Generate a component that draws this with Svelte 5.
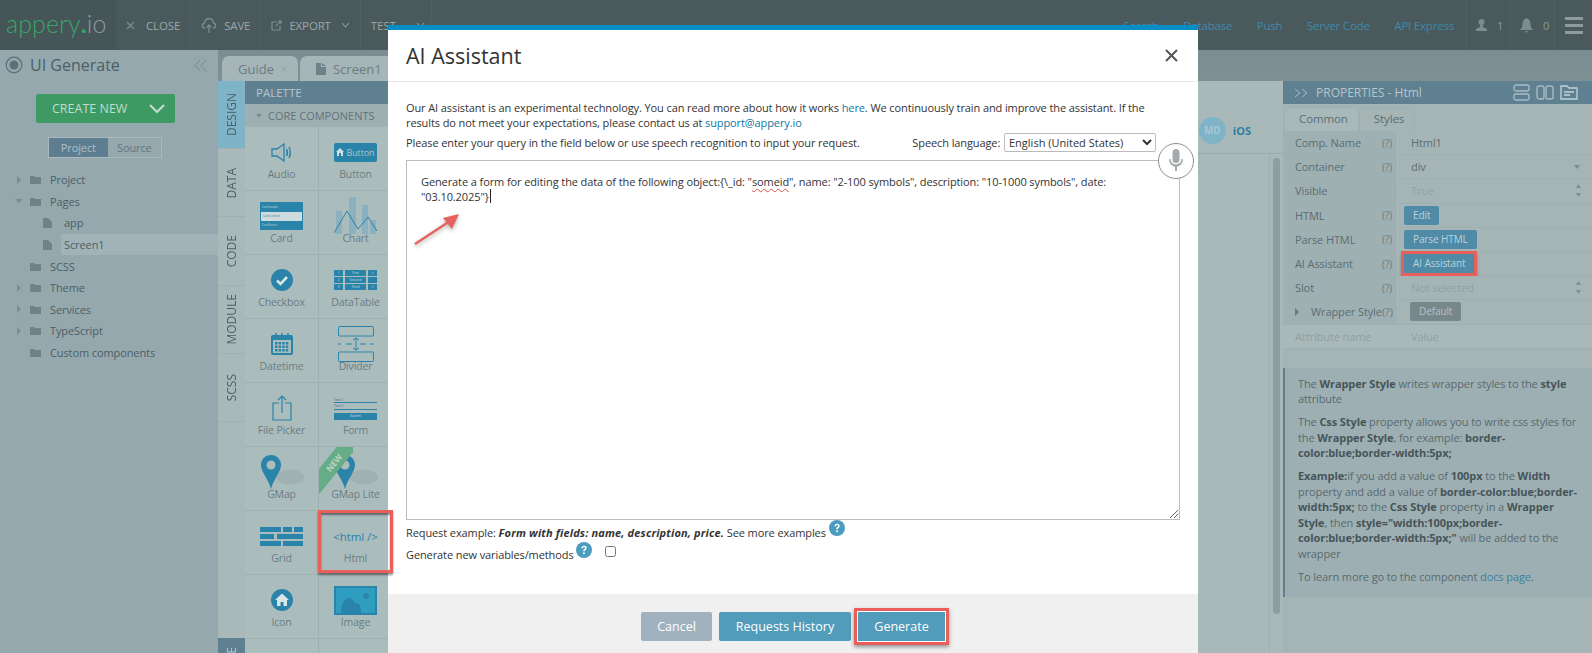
<script>
    // Left tree rows
    const tree = [
        { label: "Project", arrow: "right", icon: "folder" },
        { label: "Pages", arrow: "down", icon: "folder" },
        { label: "app", icon: "file", sub: true },
        { label: "Screen1", icon: "file", sub: true, selected: true },
        { label: "SCSS", icon: "folder" },
        { label: "Theme", arrow: "right", icon: "folder" },
        { label: "Services", arrow: "right", icon: "folder" },
        { label: "TypeScript", arrow: "right", icon: "folder" },
        { label: "Custom components", icon: "folder" }
    ];

    const sideTabs = ["Design", "Data", "Code", "Module", "SCSS"];

    const components = [
        "Audio", "Button", "Card", "Chart", "Checkbox", "DataTable", "Datetime", "Divider",
        "File Picker", "Form", "GMap", "GMap Lite", "Grid", "Html", "Icon", "Image", "", "Pin"
    ];

    const props = [
        { name: "Comp. Name", help: true, value: "Html1" },
        { name: "Container", help: true, value: "div", caret: true },
        { name: "Visible", value: "True", muted: true, spin: true },
        { name: "HTML", help: true, button: "Edit" },
        { name: "Parse HTML", help: true, button: "Parse HTML" },
        { name: "AI Assistant", help: true, button: "AI Assistant", marked: true },
        { name: "Slot", help: true, value: "Not selected", muted: true, spin: true }
    ];

    const blue = "#2a83a8";
</script>

{#snippet help()}
    <svg class="help" viewBox="0 0 16 16" width="16" height="16">
        <circle cx="8" cy="8" r="8" fill="#4b9dbf" />
        <path d="M5.4 6.2c0-1.6 1.2-2.5 2.7-2.5s2.6.9 2.6 2.2c0 1.9-2 1.9-2 3.4H7.1c0-2.2 1.9-2.2 1.9-3.3 0-.5-.4-.9-1-.9s-1 .4-1 1.1z" fill="#fff" />
        <rect x="7.1" y="10.4" width="1.7" height="1.8" fill="#fff" />
    </svg>
{/snippet}

{#snippet pin()}
    <svg width="44" height="34" viewBox="0 0 44 34">
        <ellipse cx="30" cy="22" rx="14" ry="7.500" fill="#a0b1b2" />
        <path d="M11 0C5 0 1 4.500 1 10c0 7 7 13 10 24 3-11 10-17 10-24C21 4.500 17 0 11 0z" fill={blue} />
        <circle cx="11" cy="10" r="4.500" fill="#abbcbd" />
    </svg>
{/snippet}

{#snippet icon(name)}
    {#if name === "Audio"}
        <svg width="22" height="19" viewBox="0 0 22 19" fill="none" stroke={blue} stroke-width="1.300">
            <path d="M1 6h5l7-5v17l-7-5H1z" />
            <path d="M15.500 6c1 2 1 5 0 7M18 4c1.600 3 1.600 8 0 11" stroke-width="1.500" />
        </svg>
    {:else if name === "Button"}
        <div class="btn-ico">
            <svg width="8" height="8" viewBox="0 0 8 8"><path d="M4 0l4 4H7v4H5V5H3v3H1V4H0z" fill="#cfe0e4" /></svg>
            <span>Button</span>
        </div>
    {:else if name === "Card"}
        <div class="card-ico"><span>Card header</span><span class="mid">Card content</span><span>Card footer</span></div>
    {:else if name === "Chart"}
        <svg width="44" height="40" viewBox="0 0 44 40">
            <g fill="#8bb0bf">
                <rect x="2" y="15" width="6" height="23" /><rect x="15" y="1" width="7" height="37" />
                <rect x="28" y="9" width="6" height="29" /><rect x="36" y="24" width="6" height="14" />
            </g>
            <path d="M0 37L13 15l11 18 10-12 9 14" fill="none" stroke={blue} stroke-width="1" />
        </svg>
    {:else if name === "Checkbox"}
        <svg width="22" height="22" viewBox="0 0 22 22">
            <circle cx="11" cy="11" r="11" fill={blue} />
            <path d="M6 11.500l3.500 3.500L16 8" fill="none" stroke="#d8e6e8" stroke-width="2.600" />
        </svg>
    {:else if name === "DataTable"}
        <div class="table-ico">
            {#each ["First", "Second", "Third"] as row, i}
                <span class="n">{i + 1}</span><span class="c">{row}</span><span class="n">{i === 1 ? "" : "✓"}</span>
            {/each}
        </div>
    {:else if name === "Datetime"}
        <svg width="22" height="22" viewBox="0 0 22 22">
            <path d="M2 2h18a2 2 0 0 1 2 2v16a2 2 0 0 1-2 2H2a2 2 0 0 1-2-2V4a2 2 0 0 1 2-2z" fill={blue} />
            <rect x="2" y="7" width="18" height="13" fill="#abbcbd" />
            <g fill={blue}>
                {#each [0, 1, 2] as r}
                    {#each [0, 1, 2, 3] as c}
                        <rect x={4 + c * 3.600} y={9 + r * 3.500} width="2.500" height="2.500" />
                    {/each}
                {/each}
            </g>
            <path d="M5 0v4M11 0v4M17 0v4" stroke={blue} stroke-width="1.500" />
        </svg>
    {:else if name === "Divider"}
        <svg width="38" height="38" viewBox="0 0 38 38" fill="none" stroke={blue} stroke-width="1">
            <rect x="1.500" y="1.500" width="35" height="9.500" rx="1" />
            <rect x="1.500" y="27" width="35" height="9.500" rx="1" />
            <path d="M1 19h3M9 19h6M23 19h6M33 19h4M19 13v12M16 15l3-2 3 2M16 23l3 2 3-2" />
        </svg>
    {:else if name === "File Picker"}
        <svg width="20" height="26" viewBox="0 0 20 26" fill="none" stroke={blue} stroke-width="1.200">
            <path d="M7 8H1v17h18V8h-6M10 18V1M6 5l4-4 4 4" />
        </svg>
    {:else if name === "Form"}
        <div class="form-ico"><span>Text 1</span><span>Text 2</span><b>Submit</b></div>
    {:else if name === "GMap" || name === "GMap Lite"}
        {@render pin()}
    {:else if name === "Grid"}
        <svg width="43" height="19" viewBox="0 0 43 19" fill={blue}>
            <rect width="21" height="5" /><rect x="23" width="9" height="5" /><rect x="34" width="9" height="5" />
            <rect y="7" width="14" height="5" /><rect x="17" y="7" width="26" height="5" />
            <rect y="14" width="21" height="5" /><rect x="23" y="14" width="20" height="5" />
        </svg>
    {:else if name === "Html"}
        <span class="html-ico">&lt;html /&gt;</span>
    {:else if name === "Icon"}
        <svg width="22" height="22" viewBox="0 0 22 22">
            <circle cx="11" cy="11" r="11" fill={blue} />
            <path d="M11 4.500l7 6.500h-2v6h-3.500v-4h-3v4H6v-6H4z" fill="#d8e6e8" />
        </svg>
    {:else if name === "Image"}
        <svg width="43" height="29" viewBox="0 0 43 29">
            <rect width="43" height="29" fill={blue} />
            <rect x="2" y="2" width="39" height="25" fill="#2f9dc0" />
            <circle cx="32" cy="10" r="2.800" fill={blue} />
            <path d="M7 27c0-10 4-15 8-15 3 0 5 3 6 6 2-2 6-1 6 9z" fill={blue} />
        </svg>
    {:else if name === "Pin"}
        <svg width="20" height="14" viewBox="0 0 20 14"><circle cx="10" cy="14" r="8" fill={blue} /></svg>
    {/if}
{/snippet}

<div class="app">
    <header class="topbar">
        <div class="logo"><span class="logo-green">appery</span><span class="logo-dot">.</span><span class="logo-gray">io</span></div>
        <div class="tool">
            <svg width="9" height="9" viewBox="0 0 9 9"><path d="M1 1l7 7M8 1L1 8" stroke="#7d8c8e" stroke-width="1.200" /></svg>
            <span>Close</span>
        </div>
        <div class="tool">
            <svg width="16" height="17" viewBox="0 0 16 17" fill="none" stroke="#7d8c8e" stroke-width="1.300"><path d="M4 11H3.500C1 11 .7 6.500 3.500 6 4 3 6 1.500 8 1.500S12 3 12.500 6c2.800.5 2.500 5 0 5H12M8 16V8M5.500 10.500L8 8l2.500 2.500" /></svg>
            <span>Save</span>
        </div>
        <div class="tool">
            <svg width="11" height="11" viewBox="0 0 11 11" fill="none" stroke="#7d8c8e" stroke-width="1.200"><path d="M6 2H1v8h8V6M5 6l5-5M7 1h3v3" /></svg>
            <span>Export</span>
            <svg class="chev" width="9" height="6" viewBox="0 0 9 6" fill="none" stroke="#8d9b9c" stroke-width="1.100"><path d="M1 1l3.500 4L8 1" /></svg>
        </div>
        <div class="tool test">
            <span>Test</span>
            <svg class="chev" width="9" height="6" viewBox="0 0 9 6" fill="none" stroke="#8d9b9c" stroke-width="1.100"><path d="M1 1l3.500 4L8 1" /></svg>
        </div>
        <nav class="links">
            <span>Search</span><span>Database</span><span>Push</span><span>Server Code</span><span>API Express</span>
        </nav>
        <div class="stat">
            <svg width="11" height="12" viewBox="0 0 11 12" fill="#7d8c8e"><circle cx="5.500" cy="3" r="3" /><path d="M4 6h3v2l4 2v2H0v-2l4-2z" /></svg>
            <span>1</span>
        </div>
        <div class="stat">
            <svg width="13" height="15" viewBox="0 0 13 15" fill="#7d8c8e"><path d="M6.500 0C9 1 10.500 3 10.500 6c0 3 1 4.500 2.500 6H0c1.500-1.500 2.500-3 2.500-6 0-3 1.500-5 4-6zM5 13h3l-1.500 2z" /></svg>
            <span>0</span>
        </div>
        <div class="burger"><i></i><i></i><i></i></div>
    </header>

    <div class="main">
        <aside class="side">
            <div class="side-title">
                <svg width="18" height="18" viewBox="0 0 18 18" fill="none"><circle cx="9" cy="9" r="7.800" stroke="#5d7077" stroke-width="1.200" /><circle cx="9" cy="9" r="4.500" fill="#5d7077" /></svg>
                <span>UI Generate</span>
                <svg class="collapse" width="13" height="13" viewBox="0 0 13 13" fill="none" stroke="#76898f"><path d="M6 1L1 6.500 6 12M12 1L7 6.500 12 12" /></svg>
            </div>
            <div class="create">
                <span>CREATE NEW</span>
                <svg width="16" height="10" viewBox="0 0 16 10" fill="none" stroke="#c2dccd" stroke-width="2.200"><path d="M1 1l7 7 7-7" /></svg>
            </div>
            <div class="segment"><span class="on">Project</span><span>Source</span></div>
            <ul class="tree">
                {#each tree as row}
                    <li class:sub={row.sub}>
                        <span class="arrow {row.arrow ?? ''}"></span>
                        {#if row.icon === "folder"}
                            <svg width="11" height="9" viewBox="0 0 11 9" fill="#6f8288"><path d="M0 1h4l1 1h6v7H0z" /></svg>
                        {:else}
                            <svg width="9" height="10" viewBox="0 0 9 10" fill="#6f8288"><path d="M0 0h5l4 4v6H0z" /></svg>
                        {/if}
                        <span class="tree-label" class:selected={row.selected}>{row.label}</span>
                    </li>
                {/each}
            </ul>
        </aside>

        <section class="work">
            <div class="doc-tabs">
                <div class="doc-tab guide">Guide <small>×</small></div>
                <div class="doc-tab">
                    <svg width="10" height="12" viewBox="0 0 10 12" fill="#6f8288"><path d="M0 0h5v4h5v8H0zM6 0l4 3H6z" /></svg>
                    Screen1 <small>×</small>
                </div>
            </div>
            <div class="work-body">
                <div class="vtabs">
                    {#each sideTabs as tab, i}
                        <div class="vtab" class:active={i === 0}><span>{tab}</span></div>
                    {/each}
                    <div class="vspace"></div>
                    <div class="vtab dark"><span>Theme</span></div>
                </div>
                <div class="palette">
                    <div class="pal-head">PALETTE</div>
                    <div class="pal-sub"><i></i>CORE COMPONENTS</div>
                    <div class="pal-grid">
                        {#each components as c}
                            <div class="cell">
                                {#if c === "GMap Lite"}<div class="ribbon"><span>NEW</span></div>{/if}
                                <div class="ico">{@render icon(c)}</div>
                                {#if c !== "Pin"}<div class="cell-label">{c}</div>{/if}
                            </div>
                        {/each}
                    </div>
                </div>
                <div class="canvas">
                    <div class="device">
                        <span class="avatar">MD</span>
                        <span class="ios">iOS</span>
                    </div>
                    <div class="scroll"><div class="thumb"></div></div>
                </div>
                <div class="props">
                    <div class="props-head">
                        <svg width="14" height="10" viewBox="0 0 14 10" fill="none" stroke="#a9bdc6"><path d="M1 1l5 4-5 4M8 1l5 4-5 4" /></svg>
                        <span>PROPERTIES - Html</span>
                        <svg class="view" width="17" height="17" viewBox="0 0 17 17" fill="none" stroke="#a9bdc6" stroke-width="1.300"><rect x="1" y="1" width="15" height="6" rx="2" /><rect x="1" y="10" width="15" height="6" rx="2" /></svg>
                        <svg width="18" height="15" viewBox="0 0 18 15" fill="none" stroke="#a9bdc6" stroke-width="1.300"><rect x="1" y="1" width="7" height="13" rx="2" /><rect x="10" y="1" width="7" height="13" rx="2" /></svg>
                        <svg width="18" height="15" viewBox="0 0 18 15" fill="none" stroke="#c3d2d8" stroke-width="1.300"><path d="M1 14V1h6l2 2h8v11zM4 7h10M4 10h6" /></svg>
                    </div>
                    <div class="props-tabs"><span class="on">Common</span><span>Styles</span></div>
                    {#each props as p}
                        <div class="prop">
                            <div class="prop-name"><span>{p.name}</span>{#if p.help}<em>(?)</em>{/if}</div>
                            <div class="prop-val" class:muted={p.muted}>
                                {#if p.button}
                                    <span class="mini" class:marked={p.marked}>{p.button}</span>
                                {:else}
                                    <span>{p.value}</span>
                                {/if}
                                {#if p.caret}<i class="caret"></i>{/if}
                                {#if p.spin}
                                    <svg class="spin" width="5" height="13" viewBox="0 0 5 13" fill="#7a8d93"><path d="M2.500 0L5 4H0zM0 9h5l-2.500 4z" /></svg>
                                {/if}
                            </div>
                        </div>
                    {/each}
                    <div class="prop">
                        <div class="prop-name"><i class="tri"></i><span>Wrapper Style</span><em class="tight">(?)</em></div>
                        <div class="prop-val"><span class="mini gray">Default</span></div>
                    </div>
                    <div class="prop ghost">
                        <div class="prop-name"><span>Attribute name</span></div>
                        <div class="prop-val"><span>Value</span></div>
                    </div>
                    <div class="info">
                        <p>The <b>Wrapper Style</b> writes wrapper styles to the <b>style</b> attribute</p>
                        <p>The <b>Css Style</b> property allows you to write css styles for the <b>Wrapper Style</b>, for example: <b>border-color:blue;border-width:5px;</b></p>
                        <p><b>Example:</b>if you add a value of <b>100px</b> to the <b>Width</b> property and add a value of <b>border-color:blue;border-width:5px;</b> to the <b>Css Style</b> property in a <b>Wrapper Style</b>, then <b>style="width:100px;border-color:blue;border-width:5px;"</b> will be added to the wrapper</p>
                        <p>To learn more go to the component <a href="#docs">docs page</a>.</p>
                    </div>
                </div>
            </div>
        </section>
    </div>

    <div class="modal">
        <div class="modal-head">
            <h2>AI Assistant</h2>
            <svg width="13" height="13" viewBox="0 0 13 13"><path d="M1 1l11 11M12 1L1 12" stroke="#555" stroke-width="2" /></svg>
        </div>
        <div class="modal-body">
            <p class="intro">Our AI assistant is an experimental technology. You can read more about how it works <a href="#here">here</a>. We continuously train and improve the assistant. If the results do not meet your expectations, please contact us at <a href="#mail">support@appery.io</a></p>
            <div class="lang-row">
                <span>Please enter your query in the field below or use speech recognition to input your request.</span>
                <label>Speech language:
                    <select><option>English (United States)</option></select>
                </label>
            </div>
            <div class="query">
                Generate a form for editing the data of the following object:&#123;\_id: "<span class="typo">someid</span>", name: "2-100 symbols", description: "10-1000 symbols", date: "03.10.2025"&#125;<span class="cursor"></span>
                <svg class="grip" width="9" height="9" viewBox="0 0 9 9" stroke="#666"><path d="M1 9l8-8M5 9l4-4" /></svg>
                <svg class="arrow-note" width="50" height="36" viewBox="0 0 50 36">
                    <path d="M2 33L40 8" stroke="#e4635f" stroke-width="2.400" />
                    <path d="M46 3L30 7l9 11z" fill="#e4635f" />
                </svg>
                <div class="mic">
                    <svg width="14" height="24" viewBox="0 0 14 24" fill="#a5a9ab"><rect x="3.500" y="0" width="7" height="14" rx="3.500" /><path d="M0 10h1.500c0 7 11 7 11 0H14c0 4-2.500 7-6 7.500V22h-2v-4.500C2.500 17 0 14 0 10z" /></svg>
                </div>
            </div>
            <div class="hint">Request example: <b><i>Form with fields: name, description, price.</i></b> See more examples {@render help()}</div>
            <div class="hint">Generate new variables/methods {@render help()} <input type="checkbox" /></div>
        </div>
        <div class="modal-foot">
            <button class="cancel">Cancel</button>
            <button class="history">Requests History</button>
            <button class="marked-btn">Generate</button>
        </div>
    </div>

    <!-- red annotation box, sits over the modal edge -->
    <div class="mark"></div>
</div>

<style>
    :global(body) {
        margin: 0;
        background: #95a8ad;
    }

    .app {
        position: relative;
        width: 1592px;
        height: 653px;
        overflow: hidden;
        font-family: "Open Sans", sans-serif;
        font-size: 11px;
        letter-spacing: -.1px;
        color: #5c6d72;
    }

    /* top bar */
    .topbar {
        display: flex;
        align-items: center;
        height: 50px;
        background: #4a595c;
        color: #9aa8a9;
    }

    .logo {
        width: 116px;
        height: 50px;
        flex: none;
        box-sizing: border-box;
        padding-left: 6px;
        background: #465558;
        font-family: Lato, sans-serif;
        font-weight: 300;
        font-size: 25px;
        line-height: 46px;
        letter-spacing: .1px;
    }

    .logo-green { color: #37a866; }
    .logo-dot { color: #37a866; font-weight: 700; }
    .logo-gray { color: #8d9b9c; }

    .tool {
        display: flex;
        align-items: center;
        gap: 7px;
        height: 50px;
        box-sizing: border-box;
        padding: 0 10px;
        border-right: 1px solid #4f5f62;
        text-transform: uppercase;
        font-size: 11.500px;
        letter-spacing: -.15px;
    }

    .tool:nth-child(2) { gap: 11px; }
    .tool.test { padding-right: 6px; gap: 17px; }
    .chev { margin-left: 3px; }

    .links {
        display: flex;
        gap: 24.500px;
        margin-left: auto;
        margin-right: 12px;
        color: #3f8aa8;
        font-size: 11.500px;
        letter-spacing: -.2px;
    }

    .stat {
        display: flex;
        align-items: center;
        gap: 10px;
        height: 50px;
        box-sizing: border-box;
        width: 44px;
        padding-left: 9px;
        border-left: 1px solid #4f5f62;
        color: #8d9b9c;
    }

    .burger {
        display: flex;
        flex-direction: column;
        gap: 4px;
        padding: 0 9px 0 10px;
        height: 50px;
        justify-content: center;
        border-left: 1px solid #4f5f62;
    }

    .burger i {
        display: block;
        width: 18px;
        height: 3px;
        background: #8d9b9c;
    }

    .main {
        display: flex;
        height: 603px;
    }

    /* left panel */
    .side {
        width: 218px;
        flex: none;
        box-sizing: border-box;
        background: #95a8ad;
    }

    .side-title {
        display: flex;
        align-items: center;
        gap: 7px;
        height: 30px;
        padding: 0 11px 1px 5px;
        font-size: 16px;
        letter-spacing: 0;
        color: #4c5f66;
        border-bottom: 1px solid #9aacb1;
    }

    .collapse { margin-left: auto; }

    .create {
        display: flex;
        align-items: center;
        justify-content: space-between;
        box-sizing: border-box;
        width: 139px;
        height: 29px;
        margin: 12px 0 0 36px;
        padding: 0 10px 0 16px;
        background: #3d9a62;
        border-radius: 2px;
        color: #c2dccd;
        font-size: 12.500px;
        letter-spacing: 0;
    }

    .segment {
        display: flex;
        width: 114px;
        height: 21px;
        margin: 14px 0 0 48px;
        border: 1px solid #a9b9bd;
        box-sizing: border-box;
        line-height: 19px;
        text-align: center;
    }

    .segment span { flex: 1; color: #64767b; }
    .segment .on { flex: 1.100; background: #5d7e91; color: #a9c0ca; }

    .tree {
        list-style: none;
        margin: 11px 0 0;
        padding: 0;
    }

    .tree li {
        display: flex;
        align-items: center;
        height: 21.600px;
        padding-left: 17px;
        color: #4c5f66;
    }

    .tree .arrow {
        width: 13px;
        flex: none;
    }

    .tree .arrow.right::before {
        content: "";
        display: block;
        width: 0;
        border: 4px solid transparent;
        border-left: 4px solid #7a8d93;
        border-right: 0;
    }

    .tree .arrow.down::before {
        content: "";
        display: block;
        width: 0;
        margin-left: -2px;
        border: 4px solid transparent;
        border-top: 4px solid #7a8d93;
        border-bottom: 0;
    }

    .tree svg { flex: none; }

    .tree-label { margin-left: 9px; flex: 1; line-height: 21px; }
    .tree .sub { padding-left: 30px; }
    .tree .sub .tree-label { padding-left: 3px; }
    .tree .selected { background: #a2b3b8; }

    /* workspace */
    .work {
        flex: 1;
        display: flex;
        flex-direction: column;
        min-width: 0;
    }

    .doc-tabs {
        display: flex;
        align-items: flex-end;
        gap: 2px;
        height: 31px;
        padding-left: 4px;
        background: linear-gradient(#7b8d92, #7f9195);
    }

    .doc-tab {
        display: flex;
        align-items: center;
        gap: 7px;
        height: 25px;
        padding: 0 6px 0 16px;
        border-radius: 7px 7px 0 0;
        background: #a5b5b8;
        font-size: 13px;
        letter-spacing: 0;
        color: #6a7c80;
    }

    .doc-tab.guide { width: 76px; box-sizing: border-box; }
    .doc-tab small { color: #93a4a8; font-size: 11px; }

    .work-body {
        flex: 1;
        display: flex;
        min-height: 0;
    }

    .vtabs {
        width: 27px;
        flex: none;
        display: flex;
        flex-direction: column;
        background: #a9b9ba;
    }

    .vtab {
        height: 68.200px;
        flex: none;
        display: flex;
        align-items: center;
        justify-content: center;
        box-sizing: border-box;
        border-bottom: 1px solid #9fb0b1;
        font-size: 12px;
        letter-spacing: 0;
        text-transform: uppercase;
        color: #4c5f66;
    }

    .vtab span {
        writing-mode: vertical-rl;
        transform: rotate(180deg);
    }

    .vtab.active { background: #7fb3c8; }
    .vspace { height: 216px; flex: none; }
    .vtab.dark { background: #5f8090; color: #b5c6cc; align-items: flex-start; padding-top: 9px; }

    .palette {
        width: 143px;
        flex: none;
        overflow: hidden;
        background: #abbcbd;
    }

    .pal-head {
        height: 23px;
        padding-left: 11px;
        line-height: 23px;
        background: #5f8090;
        color: #b5c7ce;
        font-size: 11.500px;
        letter-spacing: 0;
    }

    .pal-sub {
        display: flex;
        align-items: center;
        gap: 6px;
        height: 23px;
        padding-left: 11px;
        background: #9fb0b2;
        color: #5f7277;
        font-size: 11px;
        letter-spacing: 0;
        white-space: nowrap;
    }

    .pal-sub i {
        width: 0;
        border: 3.500px solid transparent;
        border-top: 4px solid #7a8d93;
        border-bottom: 0;
    }

    .pal-grid {
        display: grid;
        grid-template-columns: 74px 74px;
        grid-auto-rows: 64px;
    }

    .cell {
        position: relative;
        box-sizing: border-box;
        border-right: 1px solid #9fb0b1;
        border-bottom: 1px solid #9fb0b1;
        text-align: center;
    }

    .ico {
        height: 50px;
        display: flex;
        align-items: center;
        justify-content: center;
    }

    .cell-label {
        position: relative;
        margin-top: -11px;
        font-size: 10.500px;
        letter-spacing: -.15px;
        line-height: 16px;
        color: #6b7c80;
    }

    .btn-ico {
        display: flex;
        align-items: center;
        justify-content: center;
        gap: 2px;
        width: 43px;
        height: 19px;
        border-radius: 2px;
        background: #2a83a8;
        color: #a9c8d3;
        font-size: 9px;
    }

    .card-ico {
        display: flex;
        flex-direction: column;
        width: 43px;
        height: 28px;
        box-sizing: border-box;
        padding-top: 1px;
        background: #2a83a8;
        color: #c3d9df;
        font-size: 3px;
        line-height: 9px;
        text-align: left;
    }

    .card-ico span { height: 9px; padding-left: 2px; }
    .card-ico .mid { background: #cfdcde; color: #2a83a8; margin: 0 1px; }

    .table-ico {
        display: grid;
        grid-template-columns: 9px 1fr 9px;
        gap: 1px 2px;
        width: 43px;
        color: #c3d9df;
        font-size: 3.500px;
        line-height: 6px;
    }

    .table-ico span { background: #2a83a8; height: 6px; }

    .form-ico {
        display: flex;
        flex-direction: column;
        width: 43px;
        color: #3d6f84;
        font-size: 3.500px;
        line-height: 5.500px;
        text-align: left;
    }

    .form-ico span { border-bottom: 1px solid #2a83a8; }

    .form-ico b {
        margin-top: 3px;
        height: 7px;
        background: #2a83a8;
        color: #c3d9df;
        text-align: center;
        font-weight: 400;
    }

    .html-ico {
        color: #2a83a8;
        font-size: 11.500px;
    }

    .ribbon {
        position: absolute;
        left: 0;
        top: 0;
        width: 34px;
        height: 48px;
        overflow: hidden;
    }

    .ribbon span {
        position: absolute;
        left: -25px;
        top: 8px;
        width: 80px;
        height: 16px;
        transform: rotate(-51deg);
        background: #66ac86;
        color: #bcd4c6;
        font-size: 8.500px;
        font-weight: 700;
        line-height: 16px;
    }

    .mark {
        position: absolute;
        left: 318px;
        top: 510px;
        width: 75px;
        height: 63px;
        box-sizing: border-box;
        border: 3px solid #e85f5c;
        box-shadow: 0 2px 2px rgba(0, 0, 0, .45), inset 0 2px 2px rgba(0, 0, 0, .45);
    }

    /* canvas strip beside the modal */
    .canvas {
        flex: 1;
        min-width: 0;
        display: flex;
        flex-direction: column;
        align-items: flex-end;
        background: #a9b9ba;
    }

    .device {
        align-self: stretch;
        display: flex;
        justify-content: flex-end;
        align-items: center;
        gap: 7px;
        height: 73px;
        box-sizing: border-box;
        padding: 27px 32px 0 0;
        border-bottom: 1px solid #9aabac;
    }

    .avatar {
        width: 27px;
        height: 27px;
        border-radius: 50%;
        background: #7fb3c8;
        color: #a6c7d4;
        font-size: 10px;
        font-weight: 700;
        letter-spacing: 0;
        line-height: 27px;
        text-align: center;
    }

    .ios {
        color: #2f7fa0;
        font-weight: 700;
        font-size: 11px;
        letter-spacing: 0;
    }

    .scroll {
        width: 14px;
        flex: 1;
        padding: 4px 3px 0 3px;
        box-sizing: border-box;
        border-left: 1px solid #9fb0b1;
    }

    .thumb {
        height: 456px;
        border-radius: 4px;
        background: #8d9e9f;
    }

    /* properties */
    .props {
        width: 309px;
        flex: none;
        background: #a5b5b6;
    }

    .props-head {
        display: flex;
        align-items: center;
        gap: 6px;
        height: 23px;
        padding: 0 14px 0 11px;
        background: #5f8090;
        color: #b5c7ce;
        font-size: 12px;
        letter-spacing: 0;
    }

    .props-head span { margin-left: 2px; }
    .props-head .view { margin-left: auto; }

    .props-tabs {
        display: flex;
        height: 27px;
        padding: 3px 0 0 1px;
        box-sizing: border-box;
    }

    .props-tabs span {
        padding: 3px 10px 0 14px;
        border: 1px solid #9fb0b1;
        border-bottom: 0;
        border-radius: 6px 6px 0 0;
        font-size: 11.500px;
        color: #5c6d72;
    }

    .props-tabs .on { background: #a9b9ba; }

    .prop {
        display: flex;
        height: 24.200px;
        border-bottom: 1px solid #9fb0b1;
        box-sizing: border-box;
        background: #9fb0b2;
    }

    .prop-name {
        display: flex;
        align-items: center;
        width: 115px;
        flex: none;
        box-sizing: border-box;
        padding: 0 5px 0 12px;
        border-right: 1px solid #a9b9ba;
        color: #5c6d72;
        white-space: nowrap;
    }

    .prop-name em {
        margin-left: auto;
        font-style: normal;
        font-size: 10px;
        color: #6b7c80;
    }

    .prop-name .tight { font-size: 11px; margin: 0; }

    .tri {
        width: 0;
        margin-right: 12px;
        border: 4px solid transparent;
        border-left: 4px solid #6b7c80;
        border-right: 0;
    }

    .prop-val {
        position: relative;
        flex: 1;
        display: flex;
        align-items: center;
        padding-left: 13px;
        background: #a5b5b6;
        color: #5c6d72;
    }

    .prop-val.muted { color: #8fa1a3; }
    .prop-val:has(.mini) { padding-left: 6px; }

    .mini {
        padding: 2px 9px;
        line-height: 15px;
        border-radius: 2px;
        background: #4f8ba6;
        color: #bcd1da;
        font-size: 10px;
    }

    .mini.gray {
        margin-left: 6px;
        background: #77888c;
        color: #b5c1c3;
    }

    .mini.marked {
        position: relative;
        padding: 1px 9px;
        line-height: 17px;
        border-radius: 0;
        box-shadow: 0 0 0 3px #e85f5c, 0 3px 3px 2px #3b4648;
    }

    .caret {
        position: absolute;
        right: 12px;
        border: 3px solid transparent;
        border-top: 4px solid #7a8d93;
        border-bottom: 0;
    }

    .spin {
        position: absolute;
        right: 11px;
        top: 5px;
    }

    .ghost, .ghost .prop-val { background: #a9b9ba; }
    .ghost .prop-name, .ghost .prop-val { color: #8fa1a3; }

    .info {
        width: 309px;
        box-sizing: border-box;
        margin-top: 19px;
        padding: 8px 14px 13px 13px;
        border-left: 2px solid #5f8090;
        background: #9eafb3;
        color: #586a6f;
        line-height: 15.500px;
    }

    .info p { margin: 0 0 7.500px; }
    .info p:last-child { margin: 0; }
    .info b { color: #465558; }
    .info a { color: #3a7f9e; text-decoration: none; }

    /* modal */
    .modal {
        position: absolute;
        left: 388px;
        top: 25px;
        width: 810px;
        height: 640px;
        display: flex;
        flex-direction: column;
        box-sizing: border-box;
        border-top: 5px solid #0a8cc5;
        background: #fff;
        color: #333;
    }

    .modal-head {
        display: flex;
        align-items: center;
        justify-content: space-between;
        height: 51px;
        padding: 0 20px 0 18px;
        border-bottom: 1px solid #e8e8e8;
    }

    h2 {
        margin: 0;
        font-size: 21.500px;
        font-weight: 400;
        letter-spacing: 0;
        color: #333;
    }

    .modal-body {
        height: 513px;
        padding: 18px 18px 0;
        box-sizing: border-box;
    }

    .intro {
        margin: 0;
        width: 745px;
        line-height: 15.500px;
    }

    a { color: #11789f; text-decoration: none; }

    .lang-row {
        display: flex;
        justify-content: space-between;
        align-items: center;
        height: 20px;
        margin-top: 2px;
        padding-right: 24px;
        white-space: nowrap;
    }

    select {
        width: 152px;
        height: 19px;
        margin-left: 1px;
        border: 1px solid #bbb;
        border-radius: 2px;
        background: #fff;
        font-family: "Open Sans", sans-serif;
        font-size: 11px;
        color: #333;
    }

    .query {
        position: relative;
        box-sizing: border-box;
        height: 360px;
        margin-top: 7px;
        padding: 13px 14px;
        border: 1px solid #bdbdbd;
        line-height: 15.500px;
    }

    .typo {
        text-decoration: underline wavy #d9534f 1px;
        text-underline-offset: 2px;
    }

    .cursor {
        display: inline-block;
        width: 1px;
        height: 14px;
        margin-left: 1px;
        background: #222;
        vertical-align: -2px;
    }

    .grip {
        position: absolute;
        right: 1px;
        bottom: 1px;
    }

    .arrow-note {
        position: absolute;
        left: 6px;
        top: 50px;
        filter: drop-shadow(0 2px 2px rgba(0, 0, 0, .3));
    }

    .mic {
        position: absolute;
        right: -15px;
        top: -18px;
        width: 34px;
        height: 34px;
        display: flex;
        align-items: center;
        justify-content: center;
        border: 1px solid #8f8f8f;
        border-radius: 50%;
        background: #fff;
    }

    .hint {
        height: 22.500px;
        line-height: 20px;
        white-space: nowrap;
    }

    .hint b { letter-spacing: .15px; }

    .hint input {
        margin: 0 0 0 10px;
        width: 11px;
        height: 11px;
        vertical-align: 2px;
    }

    .help {
        vertical-align: 1px;
    }

    .modal-foot {
        display: flex;
        justify-content: flex-end;
        gap: 7px;
        height: 71px;
        box-sizing: border-box;
        padding: 18px 253px 0 0;
        background: #f0f0f0;
    }

    button {
        height: 29px;
        padding: 0;
        border: 0;
        border-radius: 2px;
        background: #519cba;
        color: #fff;
        font-family: "Open Sans", sans-serif;
        font-size: 12.500px;
    }

    .cancel {
        background: #a1b2bf;
        width: 71px;
    }

    .history { width: 132px; }

    .marked-btn {
        width: 87px;
        border-radius: 0;
        box-shadow: 0 0 0 1px #fff, 0 0 0 4px #e85f5c, 0 2px 4px 4px rgba(0, 0, 0, .4);
    }
</style>
